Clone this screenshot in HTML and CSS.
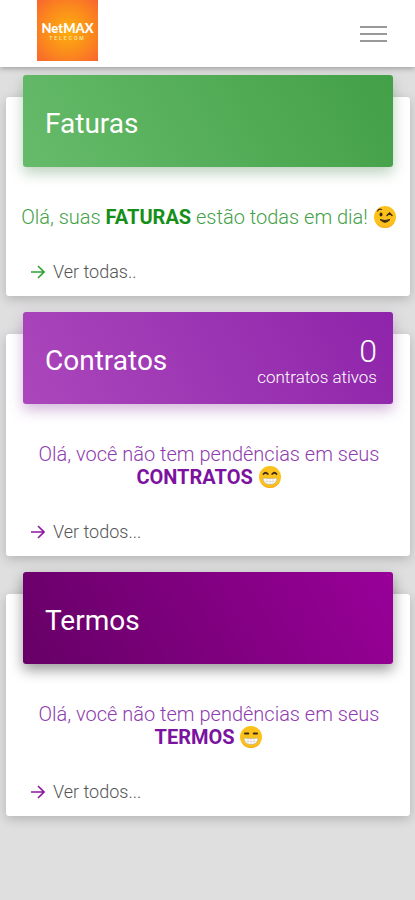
FILE: index.html
```html
<!DOCTYPE html>
<html lang="pt-BR">
<head>
  <meta charset="UTF-8">
  <title>NetMAX Telecom</title>
  <meta name="viewport" content="width=device-width, initial-scale=1.0">
  <link rel="stylesheet" href="styles.css">
</head>
<body>

  <!-- Topo -->
  <header class="topbar">
    <a href="#" class="logo">
      <span class="logo-name">NetMAX</span>
      <span class="logo-sub">TELECOM</span>
    </a>
    <button type="button" class="menu-btn" aria-label="Menu">
      <span class="bar"></span>
      <span class="bar"></span>
      <span class="bar"></span>
    </button>
  </header>

  <main class="cards">

    <!-- Faturas -->
    <section class="card green">
      <div class="banner">
        <h2>Faturas</h2>
      </div>
      <p class="message">Olá, suas <strong>FATURAS</strong> estão todas em dia!
        <svg class="emoji" viewBox="0 0 24 24" role="img" aria-label="Piscando">
          <circle cx="12" cy="12" r="11" fill="#fcc21b"/>
          <path d="M2 16.500a11 11 0 0 0 20 0a12.500 12.500 0 0 1-20 0z" fill="#f8ae1f"/>
          <path d="M4.500 6q1.500-2.500 4-1.500" fill="none" stroke="#3b2a1a" stroke-width="1.200" stroke-linecap="round"/>
          <ellipse cx="8" cy="9.500" rx="1.500" ry="2" fill="#3b2a1a"/>
          <path d="M14 10.500l2.500-2.500 2.500 2.500" fill="none" stroke="#3b2a1a" stroke-width="1.500" stroke-linecap="round"/>
          <path d="M7 14.500q5 5.500 10 0q-5 2-10 0z" fill="#3b2a1a" stroke="#3b2a1a" stroke-width="1" stroke-linejoin="round"/>
        </svg>
      </p>
      <a href="#" class="more">
        <svg class="arrow" viewBox="0 0 14 14" aria-hidden="true"><path d="M0 7h13M7 1l6 6-6 6"/></svg>
        Ver todas..
      </a>
    </section>

    <!-- Contratos -->
    <section class="card purple">
      <div class="banner">
        <h2>Contratos</h2>
        <div class="total">
          <span class="total-number">0</span>
          <span class="total-label">contratos ativos</span>
        </div>
      </div>
      <p class="message">Olá, você não tem pendências em seus <strong>CONTRATOS</strong>
        <svg class="emoji" viewBox="0 0 24 24" role="img" aria-label="Sorrindo">
          <circle cx="12" cy="12" r="11" fill="#fcc21b"/>
          <path d="M2 16.500a11 11 0 0 0 20 0a12.500 12.500 0 0 1-20 0z" fill="#f8ae1f"/>
          <path d="M5.500 9q2-2.500 4.300 0M14.200 9q2.300-2.500 4.300 0" fill="none" stroke="#3b2a1a" stroke-width="1.800" stroke-linecap="round"/>
          <path d="M5 13q7 1 14 0q0 6.500-7 6.500t-7-6.500z" fill="#fff" stroke="#b9a37c" stroke-width=".6"/>
          <path d="M5.700 16q6.300 1.500 12.600 0M9 13.500v5.200M12 13.700v5.700M15 13.500v5.200" fill="none" stroke="#c9c2b5" stroke-width=".5"/>
        </svg>
      </p>
      <a href="#" class="more">
        <svg class="arrow" viewBox="0 0 14 14" aria-hidden="true"><path d="M0 7h13M7 1l6 6-6 6"/></svg>
        Ver todos...
      </a>
    </section>

    <!-- Termos -->
    <section class="card dark-purple">
      <div class="banner">
        <h2>Termos</h2>
      </div>
      <p class="message">Olá, você não tem pendências em seus <strong>TERMOS</strong>
        <svg class="emoji" viewBox="0 0 24 24" role="img" aria-label="Sorrindo">
          <circle cx="12" cy="12" r="11" fill="#fcc21b"/>
          <path d="M2 16.500a11 11 0 0 0 20 0a12.500 12.500 0 0 1-20 0z" fill="#f8ae1f"/>
          <path d="M6 8.500h3.300M14.700 8.500h3.300" fill="none" stroke="#3b2a1a" stroke-width="2" stroke-linecap="round"/>
          <path d="M5 13q7 1 14 0q0 6.500-7 6.500t-7-6.500z" fill="#fff" stroke="#b9a37c" stroke-width=".6"/>
          <path d="M5.700 16q6.300 1.500 12.600 0M9 13.500v5.200M12 13.700v5.700M15 13.500v5.200" fill="none" stroke="#c9c2b5" stroke-width=".5"/>
        </svg>
      </p>
      <a href="#" class="more">
        <svg class="arrow" viewBox="0 0 14 14" aria-hidden="true"><path d="M0 7h13M7 1l6 6-6 6"/></svg>
        Ver todos...
      </a>
    </section>

  </main>

</body>
</html>
```
FILE: styles.css
```css
* { box-sizing: border-box; margin: 0; padding: 0; }

body {
  font-family: Roboto, sans-serif;
  font-weight: 300;
  background-color: #dfdfdf;
  min-height: 100vh;
}

.topbar {
  display: flex;
  justify-content: space-between;
  align-items: flex-start;
  height: 67px;
  padding: 0 28px 0 37px;
  background-color: #fff;
  box-shadow: 0 1px 6px rgba(0, 0, 0, 0.35);
}

.logo {
  display: flex;
  flex-direction: column;
  align-items: center;
  width: 61px;
  height: 61px;
  padding-top: 20px;
  background: radial-gradient(circle, #fdb00f, #fb8a1c 55%, #f9652f);
  color: #fff;
  text-decoration: none;
}

.logo-name {
  font-family: Lato, sans-serif;
  font-size: 13px;
  font-weight: 900;
  line-height: 16px;
}

.logo-sub {
  font-size: 5px;
  font-weight: 500;
  line-height: 5px;
  letter-spacing: 2px;
  color: #ffe9a8;
}

.menu-btn {
  display: flex;
  flex-direction: column;
  gap: 5px;
  margin-top: 26px;
  border: none;
  background: none;
  cursor: pointer;
}

.bar {
  width: 27px;
  height: 2px;
  background-color: #999;
}

.cards {
  display: flex;
  flex-direction: column;
  gap: 38px;
  padding: 30px 5px 30px 6px;
}

.card {
  display: flex;
  flex-direction: column;
  padding-bottom: 14px;
  background-color: #fff;
  border-radius: 3px;
  box-shadow: 0 3px 12px rgba(0, 0, 0, 0.2);
}

.banner {
  display: flex;
  justify-content: space-between;
  align-items: center;
  height: 92px;
  margin: -22px 17px 0;
  padding: 6px 16px 0 22px;
  border-radius: 3px;
  color: #fff;
}

.banner h2 {
  font-size: 28px;
  font-weight: 400;
  line-height: 32px;
}

.total {
  display: flex;
  flex-direction: column;
  align-items: flex-end;
}

.total-number {
  font-size: 32px;
  line-height: 32px;
}

.total-label {
  font-size: 17px;
  line-height: 20px;
}

.message {
  margin: 39px 12px 33px 14px;
  font-size: 20px;
  line-height: 23px;
  text-align: center;
}

.message strong {
  font-weight: 700;
}

.emoji {
  width: 24px;
  height: 24px;
  margin: -3px 0;
  vertical-align: -2px;
}

.more {
  display: flex;
  align-items: center;
  gap: 8px;
  padding-left: 25px;
  font-size: 18px;
  line-height: 20px;
  color: #555;
  text-decoration: none;
}

.arrow {
  width: 14px;
  height: 14px;
  fill: none;
  stroke: currentColor;
  stroke-width: 1.6;
}

.green .banner {
  background: linear-gradient(60deg, #66bb6a, #43a047);
  box-shadow: 0 6px 14px rgba(60, 120, 65, 0.35);
}

.green .message { color: #43a047; }
.green .message strong { color: #149018; }
.green .arrow { color: #2da336; }

.purple .banner {
  background: linear-gradient(60deg, #ab47bc, #8e24aa);
  box-shadow: 0 6px 14px rgba(130, 50, 150, 0.35);
}

.dark-purple .banner {
  background: linear-gradient(60deg, #660066, #990099);
  box-shadow: 0 6px 14px rgba(0, 0, 0, 0.4);
}

.purple .message,
.dark-purple .message { color: #8e3cae; }

.purple .message strong,
.dark-purple .message strong { color: #7b12a0; }

.purple .arrow,
.dark-purple .arrow { color: #8e16a4; }
```
